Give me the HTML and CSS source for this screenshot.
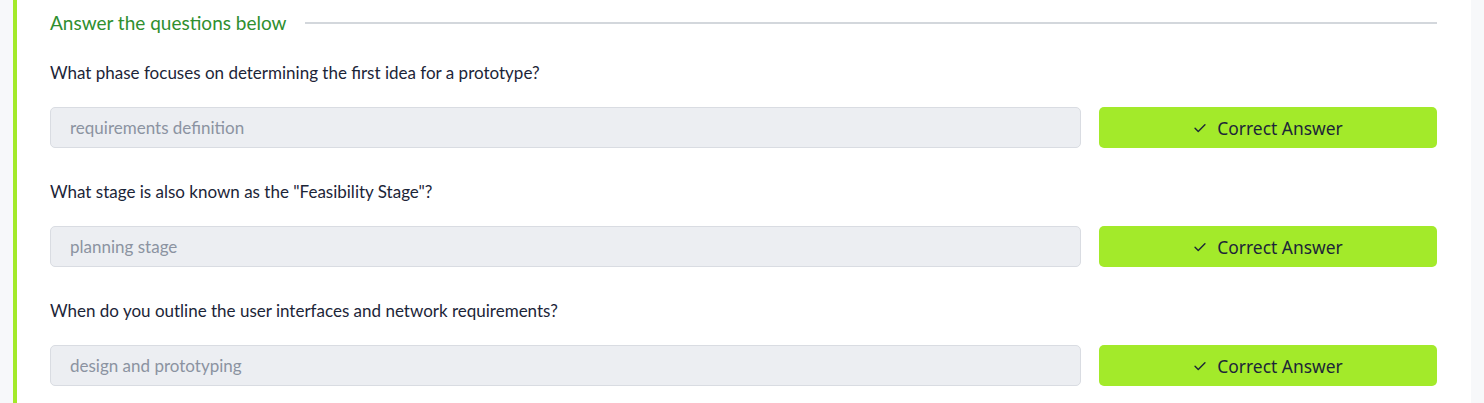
FILE: index.html
```html
<!DOCTYPE html>
<html lang="en">
<head>
<meta charset="utf-8">
<title>Answer the questions below</title>
<link rel="stylesheet" href="styles.css">
</head>
<body>
<div class="page">
  <section class="task">
    <div class="heading">
      <h3 class="heading-title">Answer the questions below</h3>
      <span class="heading-rule"></span>
    </div>

    <div class="qa qa-first">
      <p class="question">What phase focuses on determining the first idea for a prototype?</p>
      <div class="answer-row">
        <div class="answer">requirements definition</div>
        <button class="btn-correct" type="button">
          <svg class="check" viewBox="0 0 24 24" width="14" height="14" aria-hidden="true"><path d="M3.5 12.5l5.5 5.5L20.5 6.5" fill="none" stroke="#1c2538" stroke-width="2.4" stroke-linecap="round" stroke-linejoin="round"/></svg>
          <span>Correct Answer</span>
        </button>
      </div>
    </div>

    <div class="qa">
      <p class="question">What stage is also known as the "Feasibility Stage"?</p>
      <div class="answer-row">
        <div class="answer">planning stage</div>
        <button class="btn-correct" type="button">
          <svg class="check" viewBox="0 0 24 24" width="14" height="14" aria-hidden="true"><path d="M3.5 12.5l5.5 5.5L20.5 6.5" fill="none" stroke="#1c2538" stroke-width="2.4" stroke-linecap="round" stroke-linejoin="round"/></svg>
          <span>Correct Answer</span>
        </button>
      </div>
    </div>

    <div class="qa">
      <p class="question">When do you outline the user interfaces and network requirements?</p>
      <div class="answer-row">
        <div class="answer">design and prototyping</div>
        <button class="btn-correct" type="button">
          <svg class="check" viewBox="0 0 24 24" width="14" height="14" aria-hidden="true"><path d="M3.5 12.5l5.5 5.5L20.5 6.5" fill="none" stroke="#1c2538" stroke-width="2.4" stroke-linecap="round" stroke-linejoin="round"/></svg>
          <span>Correct Answer</span>
        </button>
      </div>
    </div>
  </section>
</div>
</body>
</html>
```

FILE: styles.css
```css
* {
  box-sizing: border-box;
}

html, body {
  margin: 0;
  padding: 0;
  background: #f7f8fa;
}

body {
  font-family: Lato, "Liberation Sans", sans-serif;
  color: #1c2538;
  height: 403px;
  overflow: hidden;
}

.page {
  padding: 0 13px;
  height: 100%;
}

.task {
  background: #ffffff;
  border-left: 4px solid #a3ea2a;
  padding: 9px 34px 20px 33px;
  height: 100%;
}

.heading {
  display: flex;
  align-items: center;
  gap: 18px;
  height: 28px;
}

.heading-title {
  margin: 0;
  font-size: 19px;
  line-height: 28px;
  font-weight: 400;
  color: #2f8f2f;
  white-space: nowrap;
}

.heading-rule {
  flex: 1;
  height: 2px;
  background: #d3d7dc;
}

.qa {
  margin-top: 32px;
}

.qa-first {
  margin-top: 24px;
}

.question {
  margin: 0 0 22px;
  font-size: 17px;
  line-height: 24px;
  color: #1c2538;
}

.answer-row {
  display: flex;
  gap: 18px;
}

.answer {
  flex: 1;
  height: 41px;
  display: flex;
  align-items: center;
  padding: 0 19px;
  background: #eceef2;
  border: 1px solid #d9dce2;
  border-radius: 5px;
  font-size: 17px;
  color: #8b93a1;
}

.btn-correct {
  width: 338px;
  height: 41px;
  display: flex;
  align-items: center;
  justify-content: center;
  gap: 10px;
  border: 0;
  border-radius: 5px;
  background: #a3ea2a;
  color: #1c2538;
  font-family: "Noto Sans", "DejaVu Sans", sans-serif;
  font-size: 17.4px;
  padding: 0;
}

.check {
  display: block;
  margin-top: 1px;
}
```
